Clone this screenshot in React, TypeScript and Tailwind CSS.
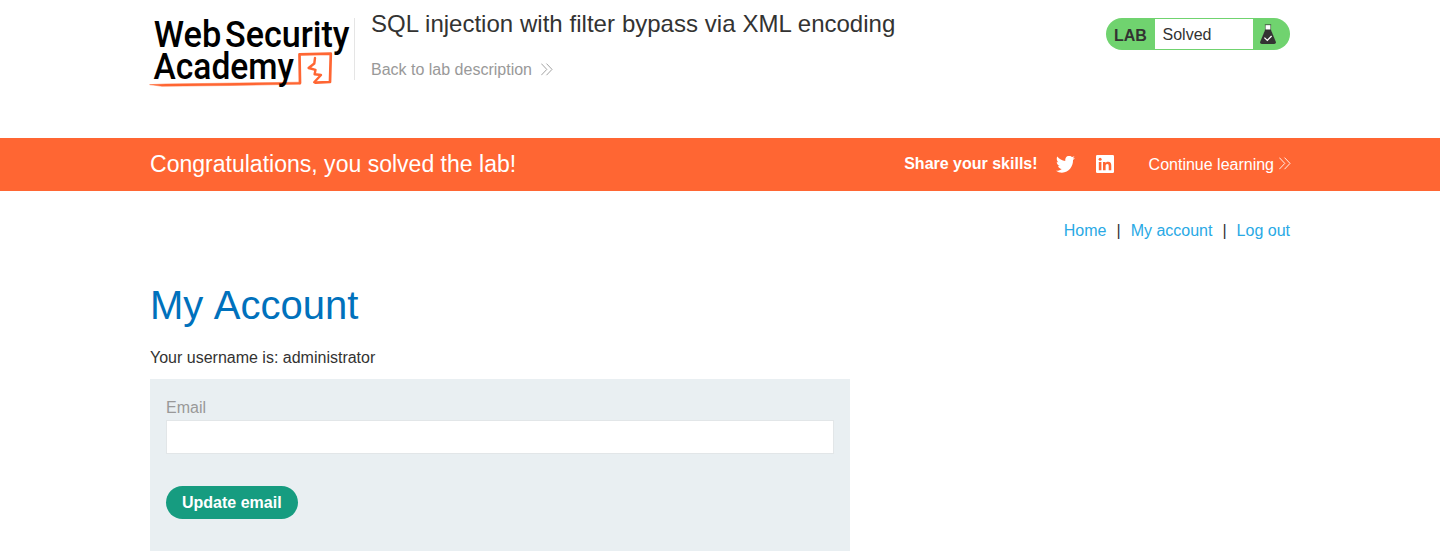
function Logo() {
  return (
    <svg
      width="204"
      height="72"
      viewBox="150 17 204 72"
      className="block shrink-0 overflow-visible"
      role="img"
      aria-label="Web Security Academy"
    >
      <g stroke="#ff6633" fill="none" strokeLinejoin="round" strokeLinecap="round">
        <path d="M150 84.6 L166 84 L300 82.2 L300.4 84.2 L230 85.5 L162 86.2 Z" fill="#ff6633" strokeWidth="0.5" />
        <path d="M300 83 L299.5 54.4 L330.8 53.7 L330 82 L315.5 82.6" strokeWidth="2.7" />
        <path d="M315 58 L314.3 63.5 L308.6 68 L315.5 69.8 L314.6 74.2 L321 75 L314.2 82.2" strokeWidth="2.4" />
      </g>
      <g className="font-['Roboto',sans-serif] font-medium" fontSize="37.5" fill="#000">
        <text x="153.8" y="46.5" textLength="67.5" lengthAdjust="spacingAndGlyphs">Web</text>
        <text x="225" y="46.5" textLength="124.5" lengthAdjust="spacingAndGlyphs">Security</text>
        <text x="153.5" y="79" textLength="140.5" lengthAdjust="spacingAndGlyphs">Academy</text>
      </g>
    </svg>
  );
}

function Chevrons() {
  return (
    <svg width="12" height="13" viewBox="0 0 12 13" fill="none" stroke="currentColor" strokeWidth="0.9" className="-mr-px mb-0.5 block">
      <path d="M0.3 0.6 L5.8 6.4 L0.3 12.2 M5.5 0.6 L11 6.4 L5.5 12.2" />
    </svg>
  );
}

function Flask() {
  return (
    <svg width="16" height="20" viewBox="0 0 16 20" className="block">
      <path d="M5.3 1 V6 L1 17 H15 L10.7 6 V1 Z" fill="#fff" />
      <path d="M4.8 0.7 H11.2" stroke="#333332" strokeWidth="0.7" />
      <path d="M5.4 1 V6 M10.6 1 V6" stroke="#333332" strokeWidth="0.5" />
      <path d="M5.2 5.5 H10.8 L15.8 17.8 Q16.3 20 14.2 20 H1.8 Q-0.3 20 0.2 17.8 Z" fill="#333332" />
      <path d="M4.4 13.6 L7.3 16.4 L11.6 12" fill="none" stroke="#fff" strokeWidth="1.3" />
    </svg>
  );
}

function TwitterIcon() {
  return (
    <svg viewBox="1 3 22.7 18.6" preserveAspectRatio="none" fill="#fff" className="block h-[17px] w-[19px]">
      <path d="M23.643 4.937c-.835.37-1.732.62-2.675.733.962-.576 1.7-1.49 2.048-2.578-.9.534-1.897.922-2.958 1.13-.85-.904-2.06-1.47-3.4-1.47-2.572 0-4.658 2.086-4.658 4.66 0 .364.042.718.12 1.06-3.873-.195-7.304-2.05-9.602-4.868-.4.69-.63 1.49-.63 2.342 0 1.616.823 3.043 2.072 3.878-.764-.025-1.482-.234-2.11-.583v.06c0 2.257 1.605 4.14 3.737 4.568-.392.106-.803.162-1.227.162-.3 0-.593-.028-.877-.082.593 1.85 2.313 3.198 4.352 3.234-1.595 1.25-3.604 1.995-5.786 1.995-.376 0-.747-.022-1.112-.065 2.062 1.323 4.51 2.093 7.14 2.093 8.57 0 13.255-7.098 13.255-13.254 0-.2-.005-.402-.014-.602.91-.658 1.7-1.477 2.323-2.41z" />
    </svg>
  );
}

function LinkedInIcon() {
  return (
    <svg width="18" height="18" viewBox="0 0 18 18" className="block">
      <rect width="18" height="18" rx="1.2" fill="#fff" />
      <circle cx="4.1" cy="4.3" r="1.5" fill="#ff6633" />
      <path d="M2.8 7 H5.4 V15.3 H2.8 Z M7 7 H9.5 V8.1 C10.1 7.2 11 6.8 12.1 6.8 C14.5 6.8 15.3 8.2 15.3 10.7 V15.3 H12.7 V11.2 C12.7 9.8 12.4 9 11.3 9 C10.1 9 9.6 9.8 9.6 11.2 V15.3 H7 Z" fill="#ff6633" />
    </svg>
  );
}

export default function App() {
  return (
    <div className="min-h-[559px] bg-white font-['Liberation_Sans',Arial,sans-serif] text-base text-[#333332]">
      <header className="mx-auto flex h-[138px] w-[1140px] items-start">
        <div className="pt-[17px]">
          <Logo />
        </div>
        <div className="mt-[18px] h-[62px] w-px bg-[#e5e5e5]" />
        <div className="flex-1 pl-4">
          <h2 className="pt-2 text-2xl leading-8 [word-spacing:0.25px]">SQL injection with filter bypass via XML encoding</h2>
          <a href="#" className="mt-[18px] inline-flex items-center gap-[9px] leading-6 text-[#999]">
            Back to lab description
            <Chevrons />
          </a>
        </div>
        <div className="mt-[18px] flex h-8 w-[184px] items-center overflow-hidden rounded-full bg-[#70d36f]">
          <span className="w-[49px] pt-[3px] pl-2 font-bold">LAB</span>
          <span className="flex h-[30px] w-[98px] items-center bg-white pt-0.5 pl-[7.5px]">Solved</span>
          <span className="pl-[7px]">
            <Flask />
          </span>
        </div>
      </header>

      <section className="h-[53px] bg-[#ff6633] text-white">
        <div className="mx-auto flex h-full w-[1140px] items-center">
          <h4 className="flex-1 text-[23.04px]">Congratulations, you solved the lab!</h4>
          <span className="pb-0.5 font-bold">Share your skills!</span>
          <a href="#" aria-label="Twitter" className="ml-[18.5px] pb-px">
            <TwitterIcon />
          </a>
          <a href="#" aria-label="LinkedIn" className="ml-[20.5px] pb-px">
            <LinkedInIcon />
          </a>
          <a href="#" className="ml-[35px] flex items-center gap-[5px]">
            Continue learning
            <Chevrons />
          </a>
        </div>
      </section>

      <main className="mx-auto w-[1140px]">
        <nav className="flex justify-end gap-2.5 pt-7 leading-6">
          <a href="#" className="text-[#29a9e5]">Home</a>
          <span>|</span>
          <a href="#" className="text-[#29a9e5]">My account</a>
          <span>|</span>
          <a href="#" className="text-[#29a9e5]">Log out</a>
        </nav>
        <h1 className="mt-[37px] text-[40px] leading-[50px] text-[#0071bc] [word-spacing:1.5px]">My Account</h1>
        <p className="mt-4 leading-6">Your username is: administrator</p>
        <form className="mt-[9px] h-[172px] w-[700px] bg-[#e9eff2] px-4 pt-[17px]" onSubmit={(e) => e.preventDefault()}>
          <label htmlFor="email" className="block h-6 leading-6 text-[#999]">Email</label>
          <input id="email" type="email" className="block h-[34px] w-full border border-[#e2e6e8] bg-white px-2 outline-none" />
          <button type="submit" className="mt-8 h-[33px] rounded-full bg-[#169c80] px-4 font-bold text-white">
            Update email
          </button>
        </form>
      </main>
    </div>
  );
}
